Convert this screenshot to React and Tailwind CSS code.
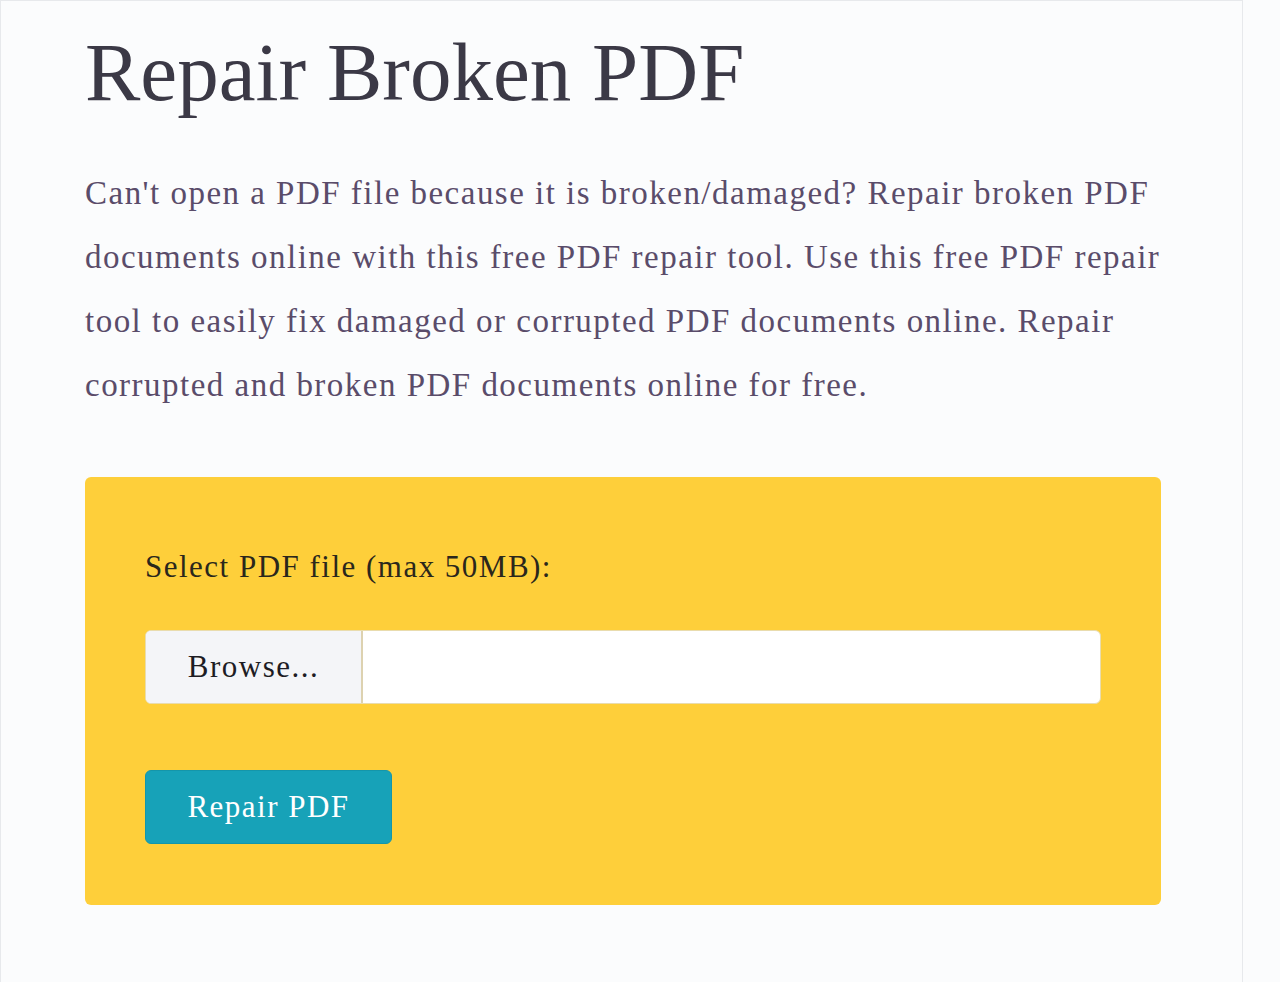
const serif = { fontFamily: '"Liberation Serif", "Times New Roman", serif' };

const App = () => {
  return (
    <div className="min-h-screen w-full bg-[#fbfcfd]" style={serif}>
      <div className="min-h-screen w-[1243px] border-x border-t border-[#e7e9ec] pl-[84px] pt-[22px]">
        <h1 className="text-[83px] leading-[1.2] font-normal text-[#3b3946]">
          Repair Broken PDF
        </h1>
        <p className="mt-[38px] w-[1100px] text-[33px] leading-[64px] tracking-[0.045em] text-[#5a4c6a]">
          Can't open a PDF file because it is broken/damaged? Repair broken PDF
          <br />
          documents online with this free PDF repair tool. Use this free PDF repair
          <br />
          tool to easily fix damaged or corrupted PDF documents online. Repair
          <br />
          corrupted and broken PDF documents online for free.
        </p>
        <div className="mt-[60px] w-[1076px] rounded-md bg-[#fecf3a] px-[60px] pt-[67px] pb-[61px]">
          <label className="block text-[31px] leading-[1.5] tracking-[0.048em] text-[#2a271c]">
            Select PDF file (max 50MB):
          </label>
          <div className="mt-[40px] flex h-[74px] w-[956px] overflow-hidden rounded-md border border-[#e9dcae] bg-white">
            <span className="flex w-[217px] items-center justify-center border-r-2 border-[#ddd2b0] bg-[#f4f5f8] text-[31px] tracking-[0.048em] text-[#1d1c24]">
              Browse...
            </span>
            <span className="flex-1" />
          </div>
          <button className="mt-[66px] flex h-[74px] w-[247px] items-center justify-center rounded-md border border-[#1496aa] bg-[#17a2b8] text-[31px] tracking-[0.048em] text-white">
            Repair PDF
          </button>
        </div>
      </div>
    </div>
  );
};

export default App;
